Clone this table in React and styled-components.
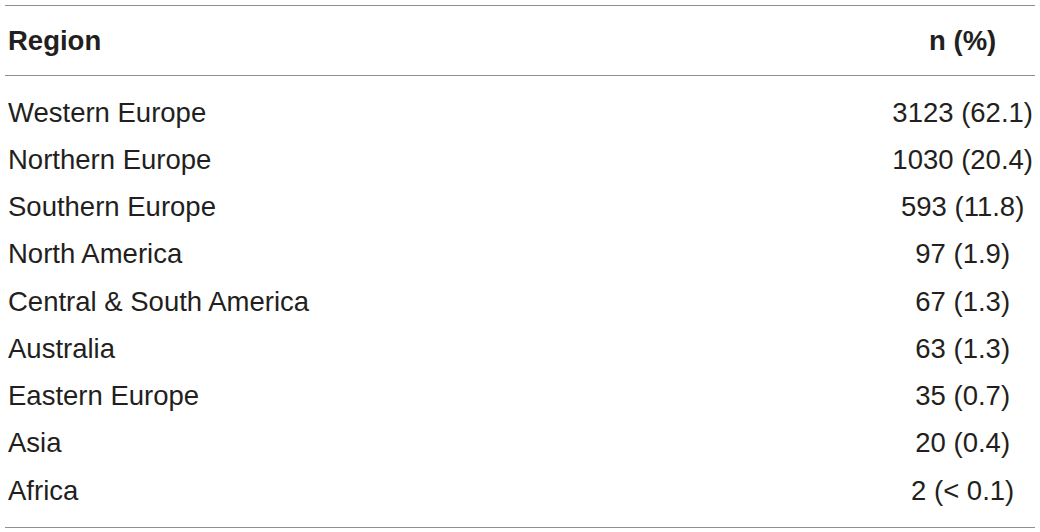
import React from 'react'
import styled, { createGlobalStyle } from 'styled-components'

const rows = [
  ['Western Europe', '3123 (62.1)'],
  ['Northern Europe', '1030 (20.4)'],
  ['Southern Europe', '593 (11.8)'],
  ['North America', '97 (1.9)'],
  ['Central & South America', '67 (1.3)'],
  ['Australia', '63 (1.3)'],
  ['Eastern Europe', '35 (0.7)'],
  ['Asia', '20 (0.4)'],
  ['Africa', '2 (< 0.1)'],
]

const Global = createGlobalStyle`
  body {
    margin: 0;
    background: #fff;
  }
`

const Table = styled.table`
  margin: 5px 0 0 5px;
  width: 1030px;
  border-collapse: collapse;
  font-family: 'Liberation Sans', Arial, sans-serif;
  font-size: 27.5px;
  color: #231f20;
  border-top: 1.5px solid #8f8f8f;
  border-bottom: 1.5px solid #8f8f8f;

  tbody tr:first-child td {
    padding-top: 13px;
  }
  tbody tr:last-child td {
    padding-bottom: 13px;
  }
`

const Head = styled.thead`
  tr {
    height: 70px;
    border-bottom: 1.5px solid #8f8f8f;
  }
`

const HeadCell = styled.th`
  font-weight: bold;
  text-align: ${p => (p.$num ? 'center' : 'left')};
  padding: 0 ${p => (p.$num ? '2px' : '0')} 0 ${p => (p.$num ? '0' : '3px')};
  white-space: nowrap;
  width: ${p => (p.$num ? '1%' : 'auto')};
`

const Cell = styled.td`
  height: 47.25px;
  padding: 0 ${p => (p.$num ? '2px' : '0')} 0 ${p => (p.$num ? '0' : '3px')};
  text-align: ${p => (p.$num ? 'center' : 'left')};
  white-space: nowrap;
  vertical-align: middle;
`

const App = () => {
  return <>
    <Global/>
    <Table>
      <Head>
        <tr>
          <HeadCell>Region</HeadCell>
          <HeadCell $num>n (%)</HeadCell>
        </tr>
      </Head>
      <tbody>
        {rows.map(([region, n]) => (
          <tr key={region}>
            <Cell>{region}</Cell>
            <Cell $num>{n}</Cell>
          </tr>
        ))}
      </tbody>
    </Table>
  </>
}

export default App
